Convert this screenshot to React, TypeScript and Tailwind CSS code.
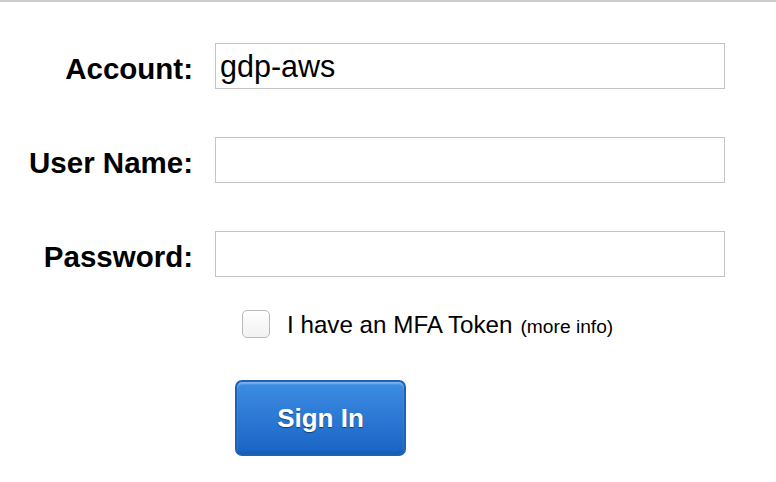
import React from "react";

export default function App() {
  const font = { fontFamily: '"Liberation Sans", Arial, Helvetica, sans-serif' };
  const rows = [
    { label: "Account:", value: "gdp-aws" },
    { label: "User Name:", value: "" },
    { label: "Password:", value: "" },
  ];
  return (
    <div className="w-[776px] h-[482px] bg-white border-t-2 border-[#cccccc] overflow-hidden" style={font}>
      <div className="pt-[41px] flex flex-col gap-[48px]">
        {rows.map((r) => (
          <div key={r.label} className="flex items-center h-[46px]">
            <div className="w-[193px] text-right font-bold text-[29.5px] text-black leading-none pt-[5px]">
              {r.label}
            </div>
            <div className="ml-[22px] w-[510px] h-[46px] border border-[#c4c4c4] bg-white flex items-center pl-[4px] text-[30.5px] text-black leading-none">
              {r.value}
            </div>
          </div>
        ))}
      </div>
      <div className="flex items-center mt-[32px] ml-[242px] h-[29px]">
        <div className="w-[28px] h-[28px] rounded-[5px] border border-[#b9b9b9] bg-gradient-to-b from-white to-[#f1f1f1] shadow-[inset_0_1px_0_#fff]" />
        <span className="ml-[17px] text-[24.2px] text-black leading-none pt-[4px]">I have an MFA Token</span>
        <span className="ml-[8px] text-[19.2px] text-black leading-none pt-[6px]">(more info)</span>
      </div>
      <div className="ml-[235px] mt-[42px]">
        <button className="w-[171px] h-[76px] rounded-[7px] border-2 border-[#1d62b8] bg-gradient-to-b from-[#3d8de3] to-[#1a64c4] shadow-[inset_0_2px_2px_rgba(255,255,255,0.35),inset_0_-2px_3px_rgba(0,0,0,0.1)] text-white font-bold text-[26px] leading-none [text-shadow:0_1px_1px_rgba(0,0,0,0.45)]" style={font}>
          Sign In
        </button>
      </div>
    </div>
  );
}
